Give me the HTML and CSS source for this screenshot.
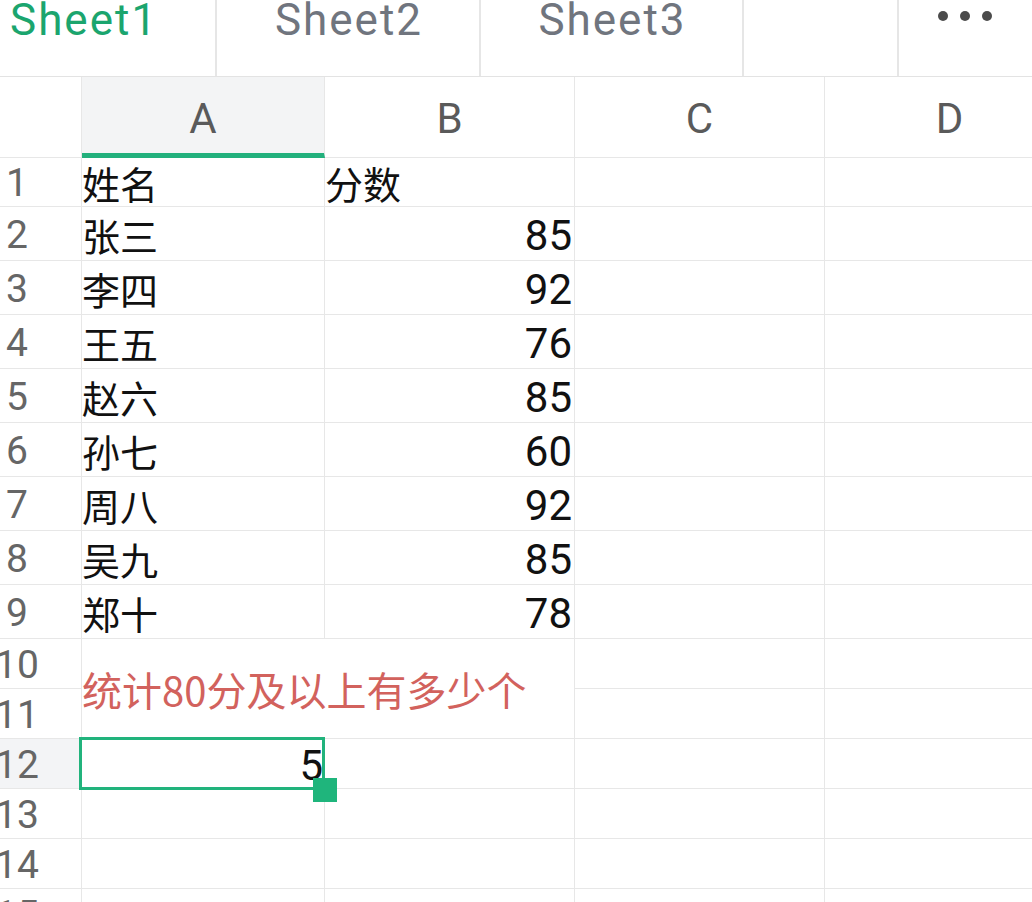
FILE: index.html
```html
<!DOCTYPE html>
<html lang="zh-CN">
<head>
<meta charset="utf-8">
<title>Sheet</title>
<link rel="stylesheet" href="styles.css">
</head>
<body>
<div class="tabs">
  <div class="tab tab-1 active"><span class="tab-label">Sheet1</span></div>
  <div class="tab tab-2"><span class="tab-label">Sheet2</span></div>
  <div class="tab tab-3"><span class="tab-label">Sheet3</span></div>
  <div class="tab tab-blank"></div>
  <div class="more"><i class="dot"></i><i class="dot"></i><i class="dot"></i></div>
</div>
<div class="sheet">
  <div class="grid">
    <div class="c corner"></div>
    <div class="c colh colh-sel">A</div>
    <div class="c colh">B</div>
    <div class="c colh">C</div>
    <div class="c colh">D</div>

    <div class="c rh"><span class="rn">1</span></div>
    <div class="c txt">姓名</div>
    <div class="c txt">分数</div>
    <div class="c"></div>
    <div class="c"></div>

    <div class="c rh"><span class="rn">2</span></div>
    <div class="c txt">张三</div>
    <div class="c num">85</div>
    <div class="c"></div>
    <div class="c"></div>

    <div class="c rh"><span class="rn">3</span></div>
    <div class="c txt">李四</div>
    <div class="c num">92</div>
    <div class="c"></div>
    <div class="c"></div>

    <div class="c rh"><span class="rn">4</span></div>
    <div class="c txt">王五</div>
    <div class="c num">76</div>
    <div class="c"></div>
    <div class="c"></div>

    <div class="c rh"><span class="rn">5</span></div>
    <div class="c txt">赵六</div>
    <div class="c num">85</div>
    <div class="c"></div>
    <div class="c"></div>

    <div class="c rh"><span class="rn">6</span></div>
    <div class="c txt">孙七</div>
    <div class="c num">60</div>
    <div class="c"></div>
    <div class="c"></div>

    <div class="c rh"><span class="rn">7</span></div>
    <div class="c txt">周八</div>
    <div class="c num">92</div>
    <div class="c"></div>
    <div class="c"></div>

    <div class="c rh"><span class="rn">8</span></div>
    <div class="c txt">吴九</div>
    <div class="c num">85</div>
    <div class="c"></div>
    <div class="c"></div>

    <div class="c rh"><span class="rn">9</span></div>
    <div class="c txt">郑十</div>
    <div class="c num">78</div>
    <div class="c"></div>
    <div class="c"></div>

    <div class="c rh"><span class="rn">10</span></div>
    <div class="c merged">统计80分及以上有多少个</div>
    <div class="c"></div>
    <div class="c"></div>

    <div class="c rh"><span class="rn">11</span></div>
    <div class="c"></div>
    <div class="c"></div>

    <div class="c rh rh-sel"><span class="rn">12</span></div>
    <div class="c num selected">5<span class="handle"></span></div>
    <div class="c"></div>
    <div class="c"></div>
    <div class="c"></div>

    <div class="c rh"><span class="rn">13</span></div>
    <div class="c"></div>
    <div class="c"></div>
    <div class="c"></div>
    <div class="c"></div>

    <div class="c rh"><span class="rn">14</span></div>
    <div class="c"></div>
    <div class="c"></div>
    <div class="c"></div>
    <div class="c"></div>

    <div class="c rh"><span class="rn">15</span></div>
    <div class="c"></div>
    <div class="c"></div>
    <div class="c"></div>
    <div class="c"></div>
  </div>
</div>
</body>
</html>
```

FILE: styles.css
```css
* { box-sizing: border-box; }

html, body {
  margin: 0;
  padding: 0;
  width: 1032px;
  height: 902px;
  overflow: hidden;
  background: #ffffff;
  font-family: Roboto, "Noto Sans CJK SC", sans-serif;
}

/* ---------- sheet tabs ---------- */
.tabs {
  display: flex;
  height: 77px;
  border-bottom: 1px solid #e3e3e3;
  overflow: hidden;
}

.tab {
  display: flex;
  justify-content: center;
  align-items: flex-start;
  height: 100%;
  border-right: 2px solid #e6e6e6;
  color: #70757e;
  font-size: 44px;
  line-height: 44px;
  letter-spacing: 2px;
}

.tab-label {
  display: block;
  margin-top: -2px;
  margin-right: -2px;
}

.tab-1 { width: 217px; justify-content: flex-start; padding-left: 10px; }
.tab-2 { width: 264px; }
.tab-3 { width: 263px; }
.tab-blank { width: 155px; }

.active { color: #1ba56e; }

.more {
  flex: 1;
  display: flex;
  justify-content: center;
  align-items: flex-start;
  gap: 12px;
  padding-top: 11px;
  padding-right: 1px;
}

.dot {
  display: block;
  width: 10px;
  height: 10px;
  border-radius: 50%;
  background: #4b4b4b;
}

/* ---------- grid ---------- */
.sheet {
  overflow: hidden;
  width: 1032px;
}

.grid {
  display: grid;
  grid-template-columns: 82px 243px 250px 250px 250px;
  grid-template-rows: 81px 49px repeat(8, 54px) repeat(6, 50px);
  width: 1075px;
}

.c {
  border-right: 1px solid #e7e7e7;
  border-bottom: 1px solid #e7e7e7;
  display: flex;
  align-items: center;
  min-width: 0;
  color: #111111;
}

.colh {
  justify-content: center;
  color: #5a5a5a;
  font-size: 42px;
  padding-top: 2px;
}

.colh-sel {
  background: #f3f4f5;
  border-bottom: 5px solid #22b07c;
  padding-top: 6px;
}

.rh {
  color: #666666;
  font-size: 39px;
  justify-content: flex-start;
  padding-top: 2px;
}

.rh-sel { background: #f3f4f6; }

.rn {
  display: flex;
  justify-content: center;
  width: 34px;
  white-space: nowrap;
}

.txt {
  font-family: "Noto Sans CJK SC", sans-serif;
  font-size: 38px;
  padding-top: 1px;
}

.num {
  justify-content: flex-end;
  font-size: 42px;
  padding-right: 2px;
  padding-top: 4px;
}

.merged {
  grid-column: span 2;
  grid-row: span 2;
  font-family: "Noto Sans CJK SC", sans-serif;
  font-size: 40px;
  color: #d2625d;
  white-space: nowrap;
}

.selected {
  position: relative;
  padding-right: 1px;
  overflow: visible;
}

.selected::after {
  content: "";
  position: absolute;
  left: -3px;
  top: -2px;
  right: -1px;
  bottom: -2px;
  border: 3px solid #21b37c;
  pointer-events: none;
}

.handle {
  position: absolute;
  left: 231px;
  top: 39px;
  width: 24px;
  height: 24px;
  background: #1fb57c;
  z-index: 2;
}
```
